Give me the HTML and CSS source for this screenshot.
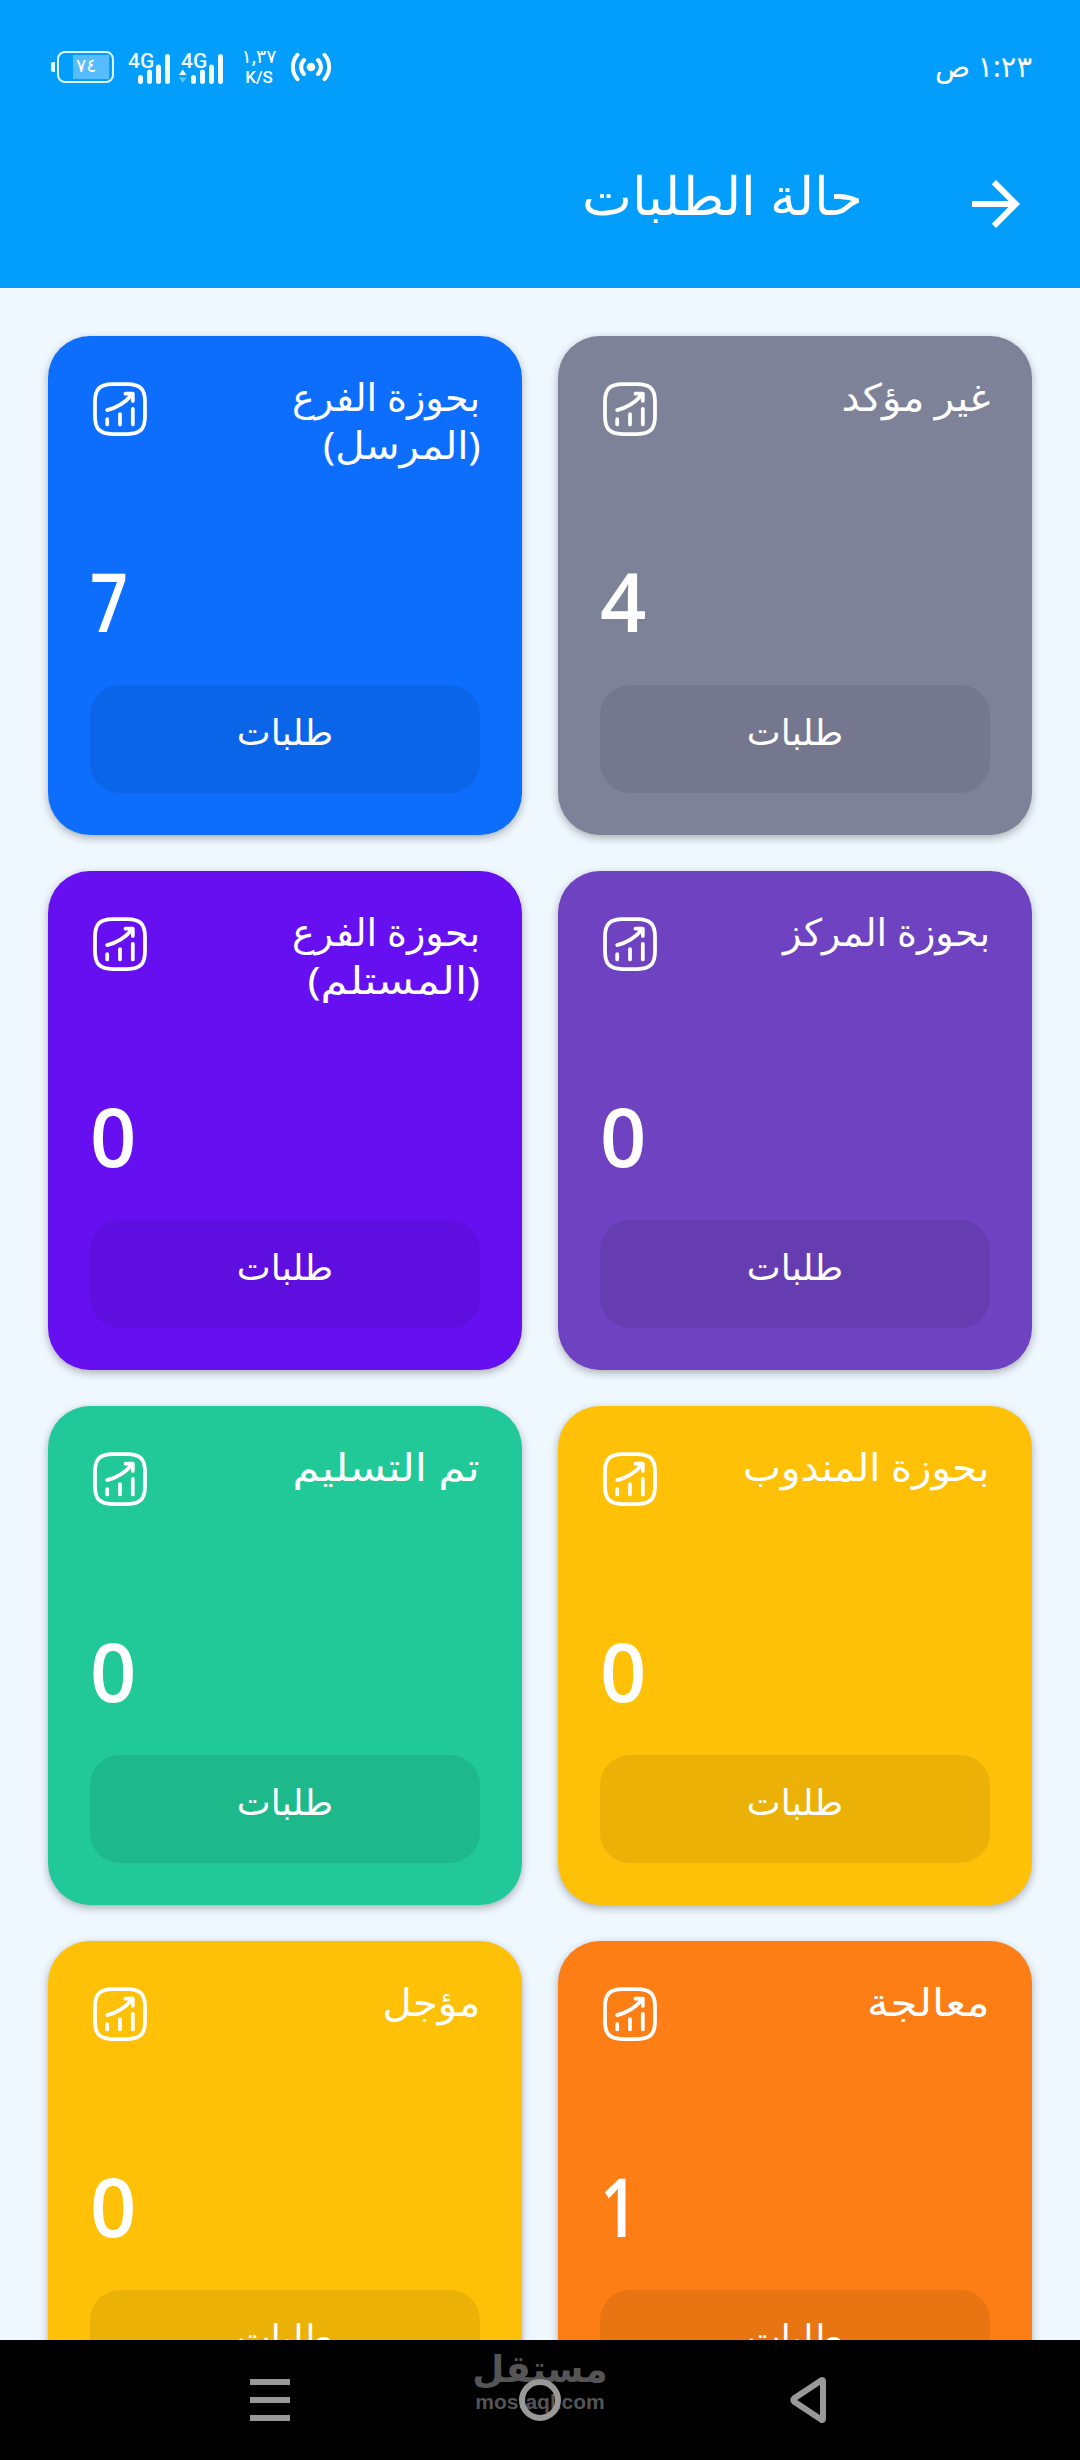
FILE: index.html
```
<!DOCTYPE html>
<html lang="ar" dir="rtl">
<head>
	<meta charset="utf-8" />
	<title>حالة الطلبات</title>
	<link rel="stylesheet" href="styles.css">
</head>
<body>
	<svg class="sprite">
		<symbol id="chart" viewBox="0 0 24 24">
			<path d="M6.88 18.15v-2.07M12 18.15v-4.14M17.12 18.15v-6.22M17.12 5.85l-.46.54a18.88 18.88 0 0 1-9.78 6.04M14.19 5.85h2.93v2.92" />
			<path d="M9 22h6c5 0 7-2 7-7V9c0-5-2-7-7-7H9C4 2 2 4 2 9v6c0 5 2 7 7 7z" />
		</symbol>
	</svg>

	<div class="top">
		<div class="status-bar">
			<span class="clock">١:٢٣ ص</span>
			<div class="status-icons">
				<div class="battery"><span class="battery-level">٧٤</span></div>
				<svg class="signal" width="43" height="38" viewBox="0 -4 43 38">
					<text x="0" y="17.500">4G</text>
					<path d="M12.500 27.500v4M21.500 22v9.500M30.500 17v14.500M39.500 6.500v25" />
				</svg>
				<svg class="signal" width="45" height="38" viewBox="0 -4 45 38">
					<text x="2" y="17.500">4G</text>
					<path d="M14.500 27.500v4M23.500 22v9.500M32.500 17v14.500M41.500 6.500v25" />
					<polygon points="0,25 7.500,25 3.700,19.500" />
					<polygon class="dim" points="0,27.500 7.500,27.500 3.700,33" />
				</svg>
				<div class="speed">
					<span class="speed-value">١,٣٧</span>
					<span class="speed-unit">K/S</span>
				</div>
				<svg class="hotspot" width="42" height="30" viewBox="0 0 42 30">
					<circle cx="21" cy="15" r="4.300" />
					<path d="M14 8a10 10 0 0 0 0 14M28 8a10 10 0 0 1 0 14M7.500 2.800a18.500 18.500 0 0 0 0 24.400M34.500 2.800a18.500 18.500 0 0 1 0 24.400" />
				</svg>
			</div>
		</div>
		<div class="app-bar">
			<svg class="back-arrow" width="72" height="72" viewBox="0 0 24 24">
				<path d="M12 4l-1.410 1.410L16.170 11H4v2h12.170l-5.580 5.590L12 20l8-8z" />
			</svg>
			<h1>حالة الطلبات</h1>
		</div>
	</div>

	<div class="list">
		<div class="card gray">
			<div class="card-head"><h2><span class="wide">غير مؤكد</span></h2><svg class="chart"><use href="#chart" /></svg></div>
			<span class="count">4</span>
			<div class="orders"><span>طلبات</span></div>
		</div>
		<div class="card blue">
			<div class="card-head"><h2><span>بحوزة الفرع</span><span class="wide">(المرسل)</span></h2><svg class="chart"><use href="#chart" /></svg></div>
			<span class="count narrow">7</span>
			<div class="orders"><span>طلبات</span></div>
		</div>
		<div class="card purple">
			<div class="card-head"><h2><span>بحوزة المركز</span></h2><svg class="chart"><use href="#chart" /></svg></div>
			<span class="count">0</span>
			<div class="orders"><span>طلبات</span></div>
		</div>
		<div class="card indigo">
			<div class="card-head"><h2><span>بحوزة الفرع</span><span class="wider">(المستلم)</span></h2><svg class="chart"><use href="#chart" /></svg></div>
			<span class="count">0</span>
			<div class="orders"><span>طلبات</span></div>
		</div>
		<div class="card yellow">
			<div class="card-head"><h2><span class="wide">بحوزة المندوب</span></h2><svg class="chart"><use href="#chart" /></svg></div>
			<span class="count">0</span>
			<div class="orders"><span>طلبات</span></div>
		</div>
		<div class="card green">
			<div class="card-head"><h2><span class="wider">تم التسليم</span></h2><svg class="chart"><use href="#chart" /></svg></div>
			<span class="count">0</span>
			<div class="orders"><span>طلبات</span></div>
		</div>
		<div class="card orange">
			<div class="card-head"><h2><span class="wider">معالجة</span></h2><svg class="chart"><use href="#chart" /></svg></div>
			<span class="count narrow">1</span>
			<div class="orders"><span>طلبات</span></div>
		</div>
		<div class="card yellow">
			<div class="card-head"><h2><span class="wide">مؤجل</span></h2><svg class="chart"><use href="#chart" /></svg></div>
			<span class="count">0</span>
			<div class="orders"><span>طلبات</span></div>
		</div>
	</div>

	<div class="nav-bar">
		<svg class="nav-icon" width="48" height="48" viewBox="0 0 48 48">
			<path d="M37 5v38a1 1 0 0 1-1.500.8L8 25.500a2 2 0 0 1 0-3L35.500 4.200A1 1 0 0 1 37 5z" />
		</svg>
		<div class="home">
			<div class="watermark">
				<span class="watermark-name">مستقل</span>
				<span class="watermark-url">mostaql.com</span>
			</div>
			<svg class="nav-icon" width="48" height="48" viewBox="0 0 48 48"><circle cx="24" cy="24" r="18" /></svg>
		</div>
		<svg class="nav-icon" width="48" height="48" viewBox="0 0 48 48">
			<path d="M4 6h40M4 24h40M4 42h40" />
		</svg>
	</div>
</body>
</html>
```
FILE: styles.css
```
* {
	box-sizing: border-box;
}
body {
	display: flex;
	flex-direction: column;
	height: 2460px;
	margin: 0;
	overflow: hidden;
	color: white;
	font-family: "Noto Sans", "DejaVu Sans", sans-serif;
	background-color: #f0f8ff;
}
h1, h2 {
	margin: 0;
	font-weight: normal;
}
.sprite {
	display: none;
}

/* Header */
.top {
	flex: none;
	height: 288px;
	background-color: #039dfb;
}
.status-bar {
	display: flex;
	justify-content: space-between;
	align-items: center;
	height: 132px;
	padding: 2px 48px 0 51px;
}
.clock {
	padding-bottom: 3px;
	font-size: 29px;
}
.status-icons {
	display: flex;
	direction: ltr;
	align-items: center;
	font-family: Roboto, "DejaVu Sans", sans-serif;
}
.battery {
	display: flex;
	align-items: center;
	width: 63px;
	height: 32px;
}
.battery::before {
	content: "";
	width: 4px;
	height: 10px;
	margin-right: 2px;
	border-radius: 2px 0 0 2px;
	background-color: #dff6ff;
}
.battery-level {
	flex: 1;
	height: 32px;
	padding-left: 17px;
	border: 2px solid #dff6ff;
	border-radius: 8px;
	background: linear-gradient(#55bcfd, #55bcfd) right 3px center / 36px 24px no-repeat;
	font-size: 19px;
	font-weight: 500;
	line-height: 26px;
}
.signal {
	margin-left: 14px;
	margin-bottom: 4px;
	fill: #f0fcff;
}
.signal + .signal {
	margin-left: 8px;
}
.signal text {
	font-size: 21px;
	font-weight: 500;
	direction: ltr;
}
.signal path {
	stroke: #f0fcff;
	stroke-width: 5;
	stroke-linecap: round;
}
.signal .dim {
	opacity: 0.4;
}
.speed {
	display: flex;
	flex-direction: column;
	align-items: center;
	width: 34px;
	margin-left: 18px;
	font-size: 17px;
	font-weight: 500;
	line-height: 20px;
}
.speed-value {
	font-size: 19px;
}
.hotspot {
	margin-left: 14px;
	fill: white;
}
.hotspot path {
	fill: none;
	stroke: white;
	stroke-width: 4;
	stroke-linecap: round;
}
.app-bar {
	display: flex;
	align-items: center;
	height: 144px;
	padding-right: 48px;
}
.back-arrow {
	fill: white;
}
.app-bar h1 {
	margin-right: 97px;
	padding-bottom: 18px;
	font-size: 53px;
	font-weight: 300;
	line-height: 60px;
}

/* Order status cards */
.list {
	display: grid;
	flex: 1;
	grid-template-columns: 1fr 1fr;
	grid-auto-rows: 499px;
	gap: 36px;
	min-height: 0;
	padding: 48px;
	overflow: hidden;
}
.card {
	display: flex;
	flex-direction: column;
	padding: 36px 42px 42px;
	border-radius: 42px;
	box-shadow: 0 3px 8px rgba(0, 0, 0, 0.3);
}
.card-head {
	display: flex;
	justify-content: space-between;
	align-items: flex-start;
	height: 144px;
}
.card-head h2 {
	display: flex;
	flex-direction: column;
	align-items: flex-start;
	font-size: 38px;
	line-height: 48px;
}
.card-head .wide {
	transform: scaleX(1.06);
	transform-origin: right;
}
.card-head .wider {
	transform: scaleX(1.15);
	transform-origin: right;
}
.chart {
	width: 60px;
	height: 60px;
	margin-top: 7px;
	fill: none;
	stroke: white;
	stroke-width: 1.5;
	stroke-linecap: round;
	stroke-linejoin: round;
}
.count {
	align-self: flex-end;
	margin-top: auto;
	margin-bottom: 28px;
	font-family: "Open Sans", "Noto Sans", sans-serif;
	font-size: 81px;
	font-weight: 600;
	line-height: 112px;
}
.count.narrow {
	transform: scaleX(0.82);
	transform-origin: left;
}
.orders {
	flex: none;
	height: 108px;
	border-radius: 30px;
	background-color: rgba(0, 0, 0, 0.08);
	font-size: 36px;
	line-height: 93px;
	text-align: center;
}
.gray { background-color: #7e8299; }
.blue { background-color: #0d6efd; }
.purple { background-color: #6f42c1; }
.indigo { background-color: #6610f2; }
.yellow { background-color: #ffc107; }
.green { background-color: #20c997; }
.orange { background-color: #fd7e14; }

/* System navigation */
.nav-bar {
	display: flex;
	flex: none;
	justify-content: space-between;
	align-items: center;
	height: 120px;
	padding: 0 246px;
	background-color: black;
}
.nav-icon {
	display: block;
	fill: none;
	stroke: #999;
	stroke-width: 6;
}
.home {
	position: relative;
}
.watermark {
	position: absolute;
	top: -30px;
	left: 50%;
	display: flex;
	flex-direction: column;
	align-items: center;
	width: 140px;
	margin-left: -70px;
	color: #555;
	font-weight: bold;
}
.watermark-name {
	font-size: 37px;
	line-height: 44px;
}
.watermark-url {
	font-family: "Liberation Sans", sans-serif;
	font-size: 21px;
	line-height: 24px;
}
.home .nav-icon {
	position: relative;
}
```
